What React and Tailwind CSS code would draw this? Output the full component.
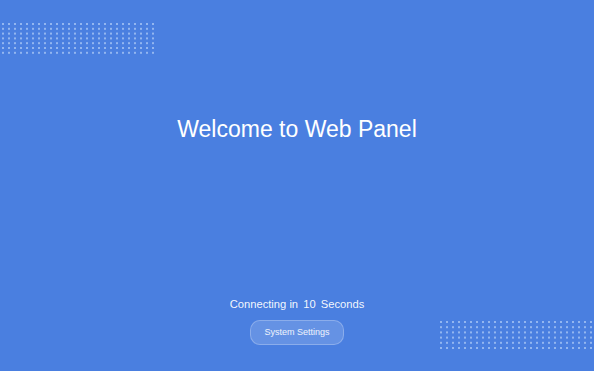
import React from 'react';

const Dots = ({ className, cols, rows, dx, dy }) => (
    <svg className={className} width={cols * dx} height={rows * dy}>
        {Array.from({ length: rows }).map((_, r) =>
            Array.from({ length: cols }).map((_, c) => (
                <rect key={r + '-' + c} x={c * dx} y={r * dy} width="2" height="2" fill="#93b6f0" />
            ))
        )}
    </svg>
);

const App = () => {
    return (
        <div className="relative w-full h-[371px] overflow-hidden bg-[#4a7fe0] font-['Liberation_Sans',Arial,sans-serif] text-white">
            <Dots className="absolute left-[2px] top-[23px]" cols={26} rows={7} dx={6} dy={4.8} />
            <Dots className="absolute left-[440px] top-[321px]" cols={26} rows={6} dx={6} dy={5.2} />

            <div className="flex flex-col items-center h-full">
                <h1 className="mt-[115px] text-[23px] leading-[28px] font-normal">Welcome to Web Panel</h1>
                <div className="mt-auto mb-[26px] flex flex-col items-center">
                    <p className="text-[11.2px] leading-[14px] text-white/95">
                        Connecting in <span className="ml-[2px]">10</span> <span className="ml-[2px]">Seconds</span>
                    </p>
                    <button className="mt-[9px] w-[94px] h-[25px] rounded-[10px] bg-white/15 border border-white/25 text-[9px] text-white/90">
                        System Settings
                    </button>
                </div>
            </div>
        </div>
    );
};

export default App;
